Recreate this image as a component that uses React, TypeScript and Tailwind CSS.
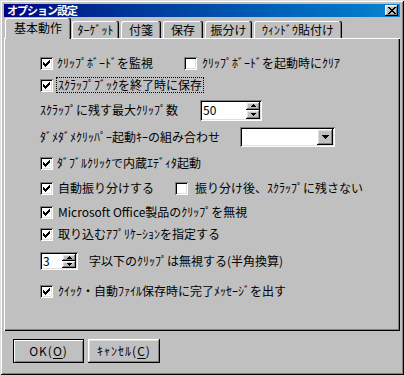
import React from 'react'

// Win98-style bevels
const raised = 'shadow-[inset_-1px_-1px_0_#000,inset_1px_1px_0_#fff,inset_-2px_-2px_0_#808080,inset_2px_2px_0_#dfdfdf]'
const sunken = 'shadow-[inset_1px_1px_0_#808080,inset_-1px_-1px_0_#fff,inset_2px_2px_0_#000,inset_-2px_-2px_0_#dfdfdf]'

const CHECK = ['......#', '.....##', '#...###', '##.###.', '#####..', '.###...', '..#....']
const CLOSE = ['##....##', '.##..##.', '..####..', '...##...', '..####..', '.##..##.', '##....##']

function Pixels({ rows }: { rows: string[] }) {
  return (
    <svg width={rows[0].length} height={rows.length} viewBox={`0 0 ${rows[0].length} ${rows.length}`} shapeRendering="crispEdges">
      {rows.flatMap((row, y) =>
        row.split('').map((c, x) => (c === '#' ? <rect key={`${x}-${y}`} x={x} y={y} width="1" height="1" fill="#000" /> : null))
      )}
    </svg>
  )
}

function Check({ checked }: { checked?: boolean }) {
  return (
    <span className={`flex h-[13px] w-[13px] shrink-0 items-center justify-center bg-white ${sunken}`}>
      {checked && <Pixels rows={CHECK} />}
    </span>
  )
}

function Arrow({ up }: { up?: boolean }) {
  return (
    <svg width="5" height="3" viewBox="0 0 5 3" shapeRendering="crispEdges">
      {up ? <path d="M2 0h1v1h1v1h1v1H0V2h1V1h1z" fill="#000" /> : <path d="M0 0h5v1H4v1H3v1H2V2H1V1H0z" fill="#000" />}
    </svg>
  )
}

function SpinBox({ value, className }: { value: string; className: string }) {
  return (
    <div className={`flex shrink-0 bg-white p-[2px] ${sunken} ${className}`}>
      <span className="flex flex-1 items-center pl-[1px] text-[12px]">{value}</span>
      <div className="flex w-[14px] flex-col">
        <span className={`flex flex-1 items-center justify-center bg-[#c0c0c0] ${raised}`}>
          <Arrow up />
        </span>
        <span className={`flex flex-1 items-center justify-center bg-[#c0c0c0] ${raised}`}>
          <Arrow />
        </span>
      </div>
    </div>
  )
}

function Combo() {
  return (
    <div className={`flex h-[20px] w-[95px] shrink-0 justify-end bg-white p-[2px] ${sunken}`}>
      <span className={`flex w-[16px] items-center justify-center bg-[#c0c0c0] ${raised}`}>
        <svg width="7" height="4" viewBox="0 0 7 4" shapeRendering="crispEdges">
          <path d="M0 0h7v1H6v1H5v1H4v1H3V3H2V2H1V1H0z" fill="#000" />
        </svg>
      </span>
    </div>
  )
}

function Tab({ children, className }: { children: React.ReactNode; className: string }) {
  return (
    <div
      className={`mb-[1px] flex h-[17px] items-center justify-center rounded-t-[2px] bg-[#c0c0c0] shadow-[inset_-1px_0_0_#000,inset_-2px_0_0_#808080,inset_1px_1px_0_#fff] ${className}`}
    >
      {children}
    </div>
  )
}

export default function App() {
  return (
    <div className="h-[375px] w-[404px] bg-[#c0c0c0] font-['Noto_Sans_CJK_JP','Noto_Sans',sans-serif] text-[12px] leading-none text-black select-none">
      <div className="flex h-full flex-col p-[4px] shadow-[inset_1px_1px_0_#dfdfdf,inset_-1px_-1px_0_#000,inset_2px_2px_0_#fff,inset_-2px_-2px_0_#808080]">
        {/* Title bar */}
        <div className="flex h-[13px] items-center justify-between bg-gradient-to-r from-[#000080] to-[#1084d0] pl-[3px] pr-[2px]">
          <span className="text-[11px] font-bold tracking-[-1px] text-white">オプション設定</span>
          <span className={`flex h-[11px] w-[13px] items-center justify-center bg-[#c0c0c0] ${raised}`}>
            <Pixels rows={CLOSE} />
          </span>
        </div>

        {/* Tabs */}
        <div className="mt-[1px] flex h-[21px] items-end">
          <div className="relative z-10 ml-[1px] flex h-[21px] w-[66px] items-center justify-center rounded-t-[2px] bg-[#c0c0c0] pb-[2px] shadow-[inset_-1px_0_0_#000,inset_-2px_0_0_#808080,inset_1px_1px_0_#fff]">
            基本動作
          </div>
          <Tab className="ml-[1px] w-[47px]">ﾀｰｹﾞｯﾄ</Tab>
          <Tab className="ml-[2px] w-[40px]">付箋</Tab>
          <Tab className="ml-[2px] w-[40px]">保存</Tab>
          <Tab className="ml-[2px] w-[47px]">振分け</Tab>
          <Tab className="ml-[2px] w-[88px]">ｳｨﾝﾄﾞｳ貼付け</Tab>
        </div>

        {/* Tab panel */}
        <div className="relative -mt-[1px] flex h-[293px] flex-col pl-[36px] pt-[14px] shadow-[inset_1px_1px_0_#fff,inset_-1px_-1px_0_#000,inset_-2px_-2px_0_#808080]">
          <div className="flex h-[22px] items-center">
            <div className="flex w-[144px] items-center gap-[4px]">
              <Check checked />
              <span>ｸﾘｯﾌﾟﾎﾞｰﾄﾞを監視</span>
            </div>
            <div className="flex items-center gap-[5px]">
              <Check />
              <span>ｸﾘｯﾌﾟﾎﾞｰﾄﾞを起動時にｸﾘｱ</span>
            </div>
          </div>

          <div className="flex h-[22px] items-center">
            <Check checked />
            <span className="ml-[3px] border border-dotted border-black px-[1px] py-[1px]">ｽｸﾗｯﾌﾟﾌﾞｯｸを終了時に保存</span>
          </div>

          <div className="flex h-[28px] items-center">
            <span className="w-[160px]">ｽｸﾗｯﾌﾟに残す最大ｸﾘｯﾌﾟ数</span>
            <SpinBox value="50" className="h-[21px] w-[62px]" />
          </div>

          <div className="flex h-[26px] items-center">
            <span className="w-[200px]">ﾀﾞﾒﾀﾞﾒｸﾘｯﾊﾟｰ起動ｷｰの組み合わせ</span>
            <Combo />
          </div>

          <div className="flex h-[26px] items-center gap-[4px]">
            <Check checked />
            <span>ﾀﾞﾌﾞﾙｸﾘｯｸで内蔵ｴﾃﾞｨﾀ起動</span>
          </div>

          <div className="flex h-[24px] items-center">
            <div className="flex w-[135px] items-center gap-[5px]">
              <Check checked />
              <span>自動振り分けする</span>
            </div>
            <div className="flex items-center gap-[7px]">
              <Check />
              <span>振り分け後、ｽｸﾗｯﾌﾟに残さない</span>
            </div>
          </div>

          <div className="flex h-[24px] items-center gap-[5px]">
            <Check checked />
            <span>Microsoft Office製品のｸﾘｯﾌﾟを無視</span>
          </div>

          <div className="flex h-[20px] items-center gap-[5px]">
            <Check checked />
            <span>取り込むｱﾌﾟﾘｹｰｼｮﾝを指定する</span>
          </div>

          <div className="flex h-[34px] items-center gap-[11px]">
            <SpinBox value="3" className="h-[18px] w-[38px]" />
            <span>字以下のｸﾘｯﾌﾟは無視する(半角換算)</span>
          </div>

          <div className="flex h-[26px] items-center gap-[5px]">
            <Check checked />
            <span>ｸｲｯｸ・自動ﾌｧｲﾙ保存時に完了ﾒｯｾｰｼﾞを出す</span>
          </div>
        </div>

        {/* Buttons */}
        <div className="mt-[8px] flex gap-[4px] pl-[9px]">
          <button className="flex h-[24px] w-[71px] items-center justify-center border border-black bg-[#c0c0c0] tracking-[1px] shadow-[inset_1px_1px_0_#fff,inset_-1px_-1px_0_#808080]">
            OK(<span className="underline underline-offset-2">O</span>)
          </button>
          <button className={`flex h-[24px] w-[72px] items-center justify-center bg-[#c0c0c0] tracking-[1px] ${raised}`}>
            ｷｬﾝｾﾙ(<span className="underline underline-offset-2">C</span>)
          </button>
        </div>
      </div>
    </div>
  )
}
